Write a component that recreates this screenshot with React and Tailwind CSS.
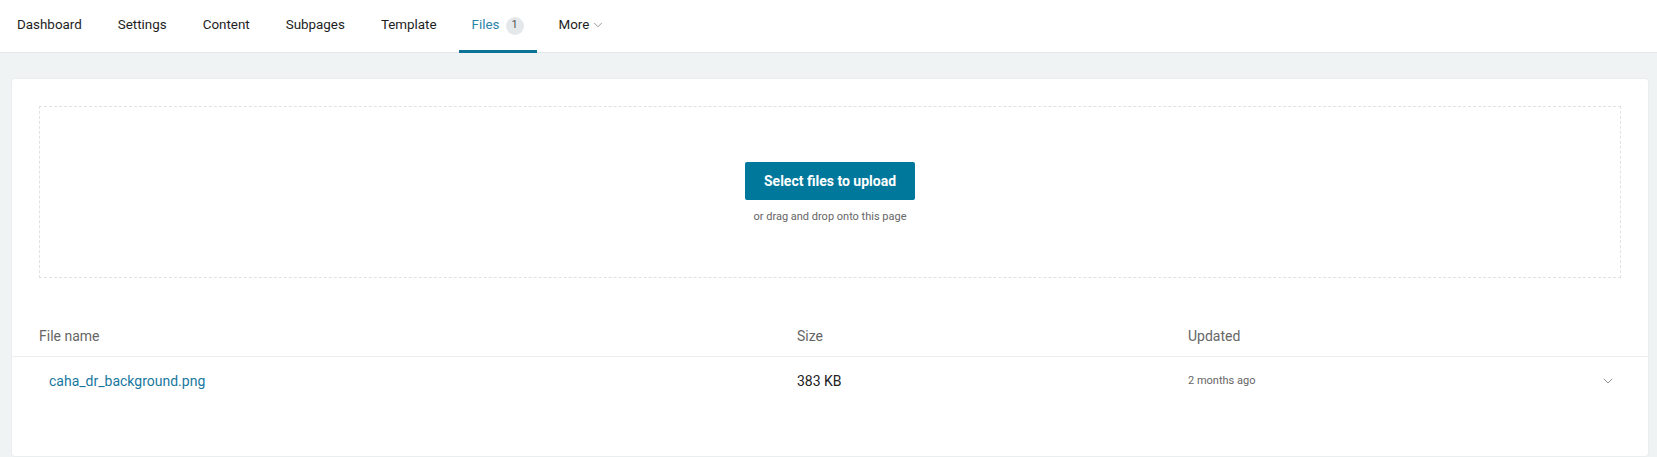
import { ChevronDown } from "lucide-react";

const tabs = ["Dashboard", "Settings", "Content", "Subpages", "Template"];

function App() {
  return (
    <div className="min-h-screen bg-[#f0f3f4] font-['Roboto',sans-serif] text-[#222]">
      {/* top tabs */}
      <nav className="h-[53px] bg-white border-b border-[#e2e6e8] flex items-stretch pl-[3px] gap-2 text-[13.4px]">
        {tabs.map((t) => (
          <a key={t} className="px-[14px] flex items-center pb-[2px] text-[#1d1d1d]">
            {t}
          </a>
        ))}
        <a className="px-[13px] flex items-center pb-[2px] text-[#2a84a6] border-b-[3px] border-[#0a7396] mb-[-1px] pt-[3px]">
          Files
          <span className="ml-[6px] w-[18px] h-[18px] rounded-full bg-[#e4e8ea] text-[#555] text-[11px] flex items-center justify-center">
            1
          </span>
        </a>
        <a className="px-[14px] flex items-center pb-[2px] text-[#1d1d1d]">
          More
          <ChevronDown className="ml-[2px] w-[14px] h-[14px] text-[#777]" strokeWidth={1.3} />
        </a>
      </nav>

      <div className="pt-[26px] pl-3 pr-[9px]">
        <div className="bg-white rounded-[3px] shadow-[0_0_2px_rgba(0,0,0,0.08)] pt-[27px] pb-[53px]">
          {/* drop zone */}
          <div className="mx-[27px] h-[172px] border border-dashed border-[#dfe2e4] flex flex-col items-center pt-[55px]">
            <button className="w-[170px] h-[38px] rounded-[2px] bg-[#00789c] text-white text-[14px] font-bold">
              Select files to upload
            </button>
            <p className="mt-[9px] text-[11px] text-[#666]">or drag and drop onto this page</p>
          </div>

          {/* file table */}
          <div className="mt-[47px]">
            <div className="flex items-center h-[32px] pb-[9px] border-b border-[#eceef0] text-[14px] text-[#666]">
              <div className="pl-[27px] w-[785px]">File name</div>
              <div className="w-[391px]">Size</div>
              <div>Updated</div>
            </div>
            <div className="flex items-center h-[46px] pt-[2px] text-[14px]">
              <div className="pl-[37px] w-[785px] text-[#17789f]">caha_dr_background.png</div>
              <div className="w-[391px] text-[#222]">383 KB</div>
              <div className="flex-1 text-[11px] text-[#666]">2 months ago</div>
              <ChevronDown className="mr-[32px] w-[16px] h-[16px] text-[#888]" strokeWidth={1.4} />
            </div>
          </div>
        </div>
      </div>
    </div>
  );
}

export default App;
